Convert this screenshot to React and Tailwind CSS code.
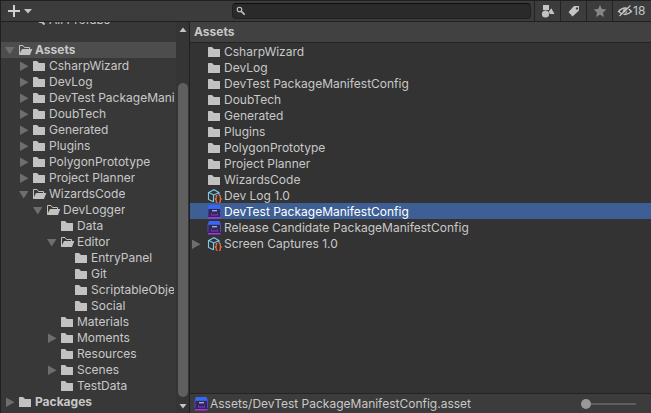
import React from "react";

const tree = [
  { name: "Assets", depth: 0, state: "open", bold: true, selected: true },
  { name: "CsharpWizard", depth: 1, state: "closed" },
  { name: "DevLog", depth: 1, state: "closed" },
  { name: "DevTest PackageManifestConfig", depth: 1, state: "closed" },
  { name: "DoubTech", depth: 1, state: "closed" },
  { name: "Generated", depth: 1, state: "closed" },
  { name: "Plugins", depth: 1, state: "closed" },
  { name: "PolygonPrototype", depth: 1, state: "closed" },
  { name: "Project Planner", depth: 1, state: "closed" },
  { name: "WizardsCode", depth: 1, state: "open" },
  { name: "DevLogger", depth: 2, state: "open" },
  { name: "Data", depth: 3 },
  { name: "Editor", depth: 3, state: "open" },
  { name: "EntryPanel", depth: 4 },
  { name: "Git", depth: 4 },
  { name: "ScriptableObjects", depth: 4 },
  { name: "Social", depth: 4 },
  { name: "Materials", depth: 3 },
  { name: "Moments", depth: 3, state: "closed" },
  { name: "Resources", depth: 3 },
  { name: "Scenes", depth: 3, state: "closed" },
  { name: "TestData", depth: 3 },
  { name: "Packages", depth: 0, state: "closed", bold: true },
];

const indent = ["pl-[3px]", "pl-[17px]", "pl-[31px]", "pl-[45px]", "pl-[59px]"];

const items = [
  { name: "CsharpWizard", kind: "folder" },
  { name: "DevLog", kind: "folder" },
  { name: "DevTest PackageManifestConfig", kind: "folder" },
  { name: "DoubTech", kind: "folder" },
  { name: "Generated", kind: "folder" },
  { name: "Plugins", kind: "folder" },
  { name: "PolygonPrototype", kind: "folder" },
  { name: "Project Planner", kind: "folder" },
  { name: "WizardsCode", kind: "folder" },
  { name: "Dev Log 1.0", kind: "object" },
  { name: "DevTest PackageManifestConfig", kind: "package", selected: true },
  { name: "Release Candidate PackageManifestConfig", kind: "package" },
  { name: "Screen Captures 1.0", kind: "object", expandable: true },
];

function Icon({ children, className = "size-4" }) {
  return (
    <svg viewBox="0 0 16 16" className={`block shrink-0 ${className}`} aria-hidden="true">
      {children}
    </svg>
  );
}

function Folder() {
  return (
    <Icon>
      <path fill="#c2c2c2" d="M2 3.500Q2 3 2.500 3H6L8 5h5.500Q14 5 14 5.500v7q0 .5-.5.5h-11Q2 13 2 12.500z" />
    </Icon>
  );
}

function OpenFolder() {
  return (
    <Icon>
      <path fill="none" stroke="#c2c2c2" d="M2.500 12.500v-9H6l1.500 2h5v2" />
      <path fill="#c2c2c2" d="M5 7H15.300L13 13H2z" />
    </Icon>
  );
}

function ObjectIcon() {
  return (
    <Icon>
      <path fill="none" stroke="#78cdeb" strokeWidth="1.100" d="M7.500 13.800L2.500 11.500V4.500L8 1.700 13 4.500V7M2.500 4.500L8 7 13 4.500M7.500 7v7" />
      <path fill="none" stroke="#f46a40" strokeWidth="1.300" d="M11.500 7.700H11Q10.200 7.700 10.200 8.500v1.700L9.200 11l1 .8v1.700q0 .8.8.8h.5M13 7.700h.5q.8 0 .8.8v1.700l1 .8-1 .8v1.700q0 .8-.8.8H13" />
    </Icon>
  );
}

function PackageIcon() {
  return (
    <Icon>
      <path fill="#2f2b50" d="M2 5h12v8H2z" />
      <path fill="#3568fa" d="M3 1h10.500L15 4.800H1.500z" />
      <path fill="#5a3fd0" d="M1.500 5h1v7h-1zM14 5h1v7h-1z" />
      <path fill="#a7a0ff" d="M6 6h5v1.400H6z" />
      <path fill="#7a3cc8" d="M5 9.500h1v1h5v-1h1v2H5z" />
      <path fill="#b32cf2" d="M2 13h12.500v1.500H2z" />
    </Icon>
  );
}

function Arrow({ open, label }) {
  return (
    <button type="button" aria-label={label} aria-expanded={open} className="block h-4 w-3 shrink-0">
      <svg viewBox="0 0 12 16" className="block h-4 w-3" aria-hidden="true">
        <path fill="#6e6e6e" d={open ? "M1 5H10.500L5.700 12.500z" : "M2 3.500v9.500L10.500 8.200z"} />
      </svg>
    </button>
  );
}

function TreeRow({ node }) {
  return (
    <li
      role="treeitem"
      aria-selected={!!node.selected}
      className={`flex h-4 pr-0.5 whitespace-nowrap ${indent[node.depth]} ${node.bold ? "font-bold" : ""} ${node.selected ? "bg-[#4d4d4d]" : ""}`}
    >
      {node.state ? <Arrow open={node.state === "open"} label={`Toggle ${node.name}`} /> : <span className="w-3 shrink-0" />}
      <span className="pl-px">{node.state === "open" ? <OpenFolder /> : <Folder />}</span>
      <span className="min-w-0 overflow-hidden pl-0.5">{node.name}</span>
    </li>
  );
}

function Item({ item }) {
  return (
    <li
      aria-current={item.selected}
      className={`flex h-4 pt-px whitespace-nowrap ${item.selected ? "bg-[#3e5f96] text-white" : ""}`}
    >
      {item.expandable ? <Arrow open={false} label={`Toggle ${item.name}`} /> : <span className="w-3 shrink-0" />}
      <span className="pl-1">
        {item.kind === "folder" && <Folder />}
        {item.kind === "object" && <ObjectIcon />}
        {item.kind === "package" && <PackageIcon />}
      </span>
      <span className="pl-0.5">{item.name}</span>
    </li>
  );
}

function ToolButton({ label, children }) {
  return (
    <button type="button" aria-label={label} className="flex w-[26px] items-center justify-center border-l border-[#232323]">
      {children}
    </button>
  );
}

function Toolbar() {
  return (
    <header className="flex h-[22px] border-y border-[#202020] bg-[#3c3c3c]">
      <button type="button" aria-label="Create" className="flex w-9 items-center pl-1.5">
        <svg viewBox="0 0 26 16" className="block h-4 w-[26px]" aria-hidden="true">
          <path stroke="#d0d0d0" strokeWidth="2" d="M1 8h12M7 2v12" />
          <path fill="#c4c4c4" d="M17 6h8l-4 4.500z" />
        </svg>
      </button>
      <label className="mt-0.5 mr-[3px] ml-auto flex h-4 w-[46%] items-center rounded border border-t-[#0d0d0d] border-[#212121] bg-[#2a2a2a] pl-0.5">
        <Icon className="size-3">
          <circle cx="6" cy="6" r="3" fill="none" stroke="#c4c4c4" strokeWidth="1.500" />
          <path stroke="#c4c4c4" strokeWidth="2.200" d="M8.500 8.500l4.500 4.500" />
        </Icon>
        <input type="text" aria-label="Search" className="min-w-0 flex-1 bg-transparent outline-none" />
      </label>
      <ToolButton label="Search by type">
        <Icon>
          <path fill="#c4c4c4" d="M3 2h6v5H3zM11.300 5.200L14.500 11H9.800L8.800 8.500z" />
          <circle cx="5.500" cy="11" r="3.600" fill="#c4c4c4" />
        </Icon>
      </ToolButton>
      <ToolButton label="Search by label">
        <Icon>
          <path fill="#c4c4c4" fillRule="evenodd" d="M8 3H12.500l.5.5V7.500L6.500 13.500 2.500 9zM11 4.300a1.200 1.200 0 1 0 .01 0z" />
        </Icon>
      </ToolButton>
      <ToolButton label="Save search">
        <Icon>
          <path fill="#858585" d="M8 2l1.900 4 4.500.5-3.400 3 1 4.500L8 11.700 4 14l1-4.500-3.400-3L6.100 6z" />
        </Icon>
      </ToolButton>
      <button type="button" aria-label="18 hidden packages" className="flex w-[39px] items-center border-l border-[#232323] pl-1">
        <Icon>
          <path fill="none" stroke="#c4c4c4" strokeWidth="1.300" d="M1.500 8.500Q8 1.500 14.500 8.500 8 14.500 1.500 8.500zM2.500 13L13.500 2.500" />
          <circle cx="8" cy="8.300" r="2.200" fill="#c4c4c4" />
          <path stroke="#3c3c3c" strokeWidth="1" d="M4 13.200L14.500 3.200" />
        </Icon>
        <span>18</span>
      </button>
    </header>
  );
}

export default function App() {
  return (
    <div className="flex h-screen flex-col overflow-hidden border-l border-[#202020] bg-[#383838] font-[Inter,sans-serif] text-[12px] leading-4 text-[#c8c8c8]">
      <Toolbar />
      <div className="flex min-h-0 flex-1">
        <nav aria-label="Project folders" className="flex w-[189px] shrink-0 border-r border-[#202020]">
          <div className="min-w-0 flex-1 overflow-hidden">
            <div className="-mt-2.5 mb-3.5 flex h-4 pl-9">
              <svg viewBox="0 0 12 16" className="h-4 w-3 shrink-0" aria-hidden="true">
                <circle cx="4" cy="7" r="3" fill="none" stroke="#c4c4c4" strokeWidth="2" />
                <path stroke="#c4c4c4" strokeWidth="2" d="M4 9l3.500 3.500" />
              </svg>
              <span>All Prefabs</span>
            </div>
            <ul role="tree">
              {tree.map((node) => (
                <TreeRow key={node.name} node={node} />
              ))}
            </ul>
          </div>
          <div className="flex w-[13px] shrink-0 flex-col items-center bg-[#353535] pl-px">
            <svg viewBox="0 0 12 16" className="h-4 w-3 shrink-0" aria-hidden="true">
              <path fill="#c4c4c4" d="M2.500 10h7L6 5.500z" />
            </svg>
            <div className="mt-[45px] w-2.5 flex-1 rounded-full bg-[#5f5f5f]" />
            <svg viewBox="0 0 12 16" className="h-4 w-3 shrink-0" aria-hidden="true">
              <path fill="#c4c4c4" d="M2.500 7h7L6 11.500z" />
            </svg>
          </div>
        </nav>
        <main className="flex min-w-0 flex-1 flex-col bg-[#333333]">
          <h1 className="h-[21px] border-b border-[#242424] bg-[#414141] pt-0.5 pl-1 font-bold">Assets</h1>
          <ul className="min-h-0 flex-1 overflow-hidden">
            {items.map((item) => (
              <Item key={item.kind + item.name} item={item} />
            ))}
          </ul>
          <footer className="flex h-5 items-center border-t border-[#232323] bg-[#3c3c3c] pr-[15px] pl-[3px]">
            <PackageIcon />
            <span className="min-w-0 flex-1 truncate pl-px">Assets/DevTest PackageManifestConfig.asset</span>
            <input
              type="range"
              min="0"
              max="100"
              defaultValue="0"
              aria-label="Icon size"
              className="h-2.5 w-[55px] appearance-none bg-transparent [&::-webkit-slider-runnable-track]:h-0.5 [&::-webkit-slider-runnable-track]:bg-[#5e5e5e] [&::-webkit-slider-thumb]:-mt-1 [&::-webkit-slider-thumb]:size-2.5 [&::-webkit-slider-thumb]:appearance-none [&::-webkit-slider-thumb]:rounded-full [&::-webkit-slider-thumb]:bg-[#999999]"
            />
          </footer>
        </main>
      </div>
    </div>
  );
}
